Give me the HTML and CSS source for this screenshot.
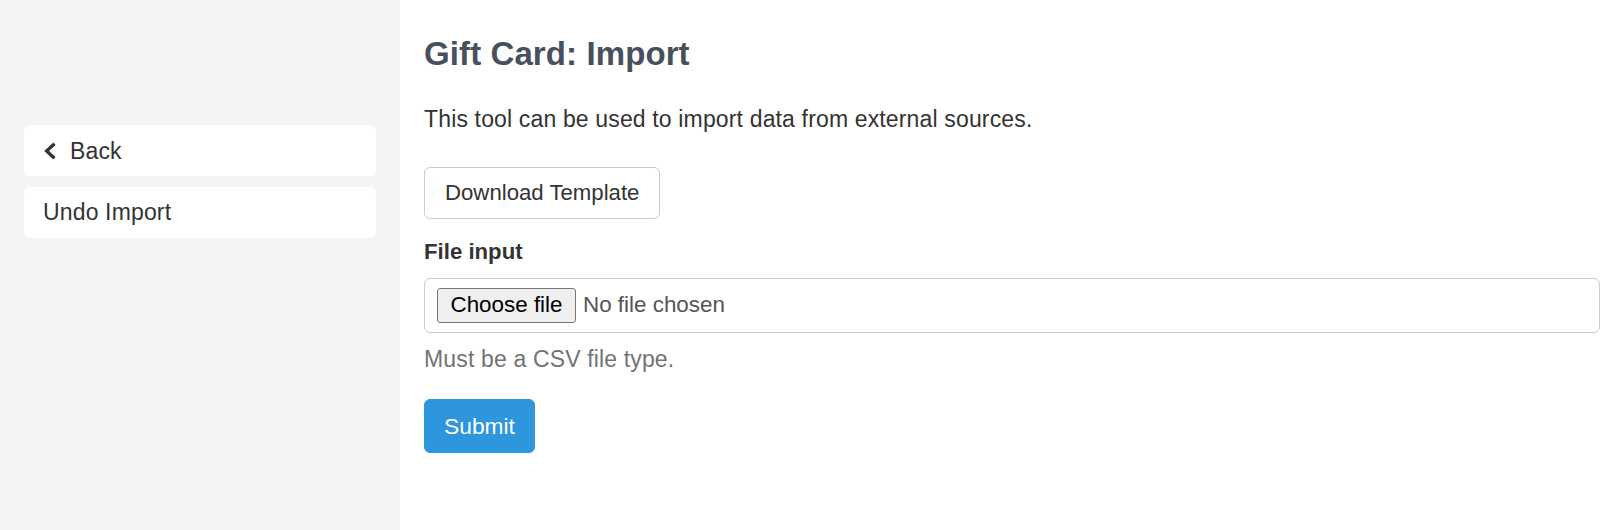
FILE: index.html
```html
<!DOCTYPE html>
<html lang="en">
<head>
<meta charset="utf-8">
<title>Gift Card: Import</title>
<link rel="stylesheet" href="styles.css">
</head>
<body>
<div class="layout">
  <aside class="sidebar">
    <nav class="menu">
      <a class="menu-item" href="#">
        <svg class="chev" width="14" height="18" viewBox="0 0 14 18" aria-hidden="true"><polyline points="11.5,1.8 3.6,9 11.5,16.2" fill="none" stroke="#333" stroke-width="3.3"/></svg>
        <span>Back</span>
      </a>
      <a class="menu-item" href="#"><span>Undo Import</span></a>
    </nav>
  </aside>
  <main class="main">
    <h1 class="title">Gift Card: Import</h1>
    <p class="intro">This tool can be used to import data from external sources.</p>
    <button class="btn btn-default" type="button">Download Template</button>
    <form class="form">
      <label class="label">File input</label>
      <div class="file-control">
        <span class="file-btn">Choose file</span>
        <span class="file-name">No file chosen</span>
      </div>
      <p class="help">Must be a CSV file type.</p>
      <button class="btn btn-primary" type="button">Submit</button>
    </form>
  </main>
</div>
</body>
</html>
```

FILE: styles.css
```css
html, body {
  margin: 0;
  padding: 0;
  height: 100%;
}
body {
  font-family: "Liberation Sans", Arial, sans-serif;
  font-size: 23px;
  letter-spacing: 0.15px;
  line-height: 32px;
  color: #333;
  background: #fff;
}
.layout {
  display: flex;
  min-height: 530px;
}
.sidebar {
  width: 400px;
  flex: 0 0 400px;
  background: #f4f4f4;
  box-sizing: border-box;
  padding: 125px 24px 0 24px;
}
.menu {
  display: flex;
  flex-direction: column;
  gap: 10.5px;
}
.menu-item {
  display: flex;
  align-items: center;
  gap: 13px;
  background: #fff;
  border-radius: 6px;
  padding: 9.5px 19px;
  color: #333;
  text-decoration: none;
}
.chev {
  display: block;
  flex: 0 0 auto;
}
.main {
  flex: 1;
  padding: 34px 18px 0 24px;
  min-width: 0;
}
.title {
  margin: 0;
  font-size: 33px;
  letter-spacing: 0.1px;
  line-height: 40px;
  font-weight: bold;
  color: #47515d;
}
.intro {
  margin: 29px 0 32px 0;
}
.btn {
  display: inline-block;
  font-family: inherit;
  letter-spacing: 0;
  font-size: 22.2px;
  line-height: 32px;
  padding: 9px 20px;
  border-radius: 6px;
  cursor: pointer;
}
.btn-default {
  background: #fff;
  color: #333;
  border: 1px solid #ccc;
}
.btn-primary {
  background: #2d96dd;
  color: #fff;
  border: 1px solid #2d96dd;
  font-size: 22.8px;
  padding: 10px 19px;
}
.form {
  margin-top: 17px;
}
.label {
  display: block;
  font-weight: bold;
  letter-spacing: 0;
  font-size: 22.2px;
  margin-bottom: 9.5px;
}
.file-control {
  display: flex;
  align-items: center;
  height: 55px;
  box-sizing: border-box;
  border: 1px solid #ccc;
  border-radius: 6px;
  padding: 0 12px;
}
.file-btn {
  display: inline-flex;
  align-items: center;
  justify-content: center;
  box-sizing: border-box;
  height: 35px;
  width: 139px;
  background: #efefef;
  border: 1px solid #767676;
  border-radius: 3px;
  color: #000;
  letter-spacing: 0;
  font-size: 22.4px;
}
.file-name {
  margin-left: 7px;
  color: #555;
  letter-spacing: 0;
  font-size: 22.4px;
}
.help {
  margin: 10px 0 24px 0;
  color: #737373;
}
```
